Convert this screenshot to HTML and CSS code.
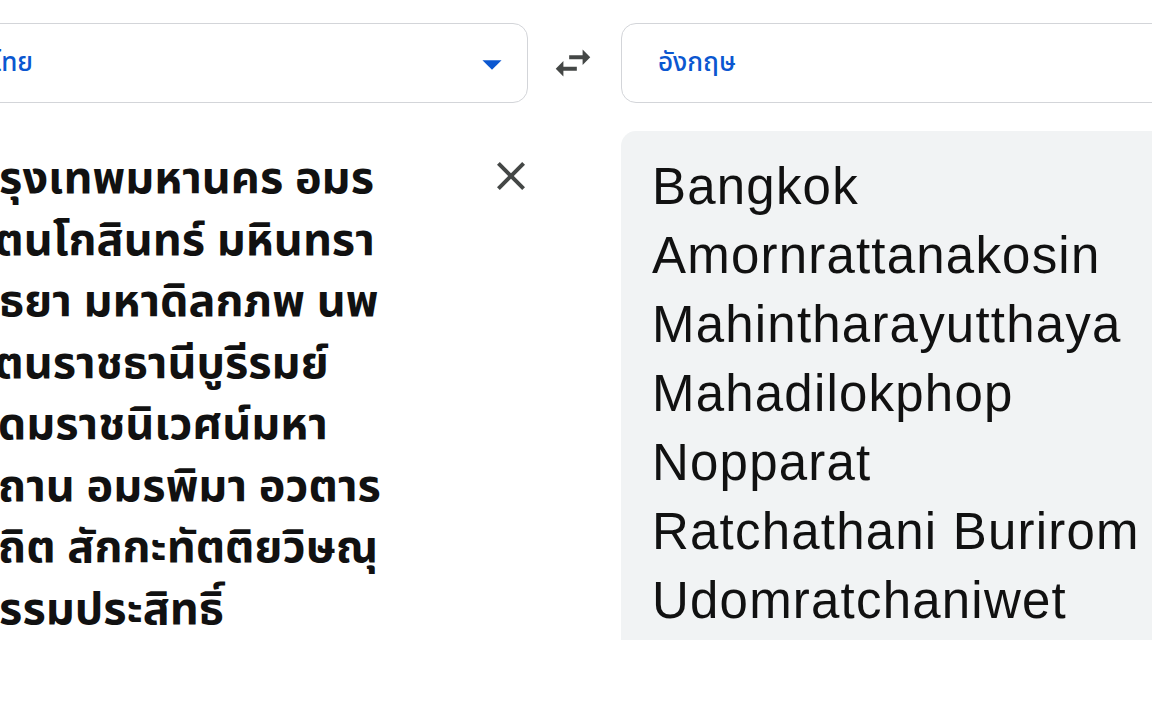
FILE: index.html
```html
<!DOCTYPE html>
<html lang="th">
<head>
<meta charset="utf-8">
<title>Translate</title>
<link rel="stylesheet" href="styles.css">
</head>
<body>
<main class="page">
  <section class="col col-source">
    <div class="lang-box">
      <span class="lang-label">ไทย</span>
      <svg class="drop" viewBox="0 0 24 24" width="46" height="46"><path d="M7 10l5 5 5-5z"/></svg>
    </div>
    <div class="source-area">
      <p class="source-text">กรุงเทพมหานคร อมร<br>รัตนโกสินทร์ มหินทรา<br>ยุธยา มหาดิลกภพ นพ<br>รัตนราชธานีบูรีรมย์<br>อุดมราชนิเวศน์มหา<br>สถาน อมรพิมา อวตาร<br>สถิต สักกะทัตติยวิษณุ<br>กรรมประสิทธิ์</p>
      <button class="clear" aria-label="ล้าง"><svg viewBox="0 0 24 24" width="48" height="48"><path d="M19 6.41L17.59 5 12 10.59 6.41 5 5 6.41 10.59 12 5 17.59 6.41 19 12 13.41 17.59 19 19 17.59 13.41 12z"/></svg></button>
    </div>
  </section>
  <div class="swap-col">
    <svg class="swap" viewBox="0 0 24 24" width="46" height="46"><path d="M6.99 11L3 15l3.99 4v-3H14v-2H6.99v-3zM21 9l-3.99-4v3H10v2h7.01v3L21 9z"/></svg>
  </div>
  <section class="col col-target">
    <div class="lang-box lang-box-target">
      <span class="lang-label">อังกฤษ</span>
    </div>
    <div class="output">
      <p class="output-text">Bangkok<br>Amornrattanakosin<br>Mahintharayutthaya<br>Mahadilokphop<br>Nopparat<br>Ratchathani Burirom<br>Udomratchaniwet</p>
    </div>
  </section>
</main>
</body>
</html>
```
FILE: styles.css
```css
html, body {
  margin: 0;
  padding: 0;
  background: #ffffff;
  overflow: hidden;
  width: 1152px;
  height: 720px;
}
.page {
  display: flex;
  margin-left: -60px;
  padding-top: 23px;
  width: 1400px;
  font-family: "Noto Sans Thai", Tahoma, Loma, Garuda, "Noto Sans", sans-serif;
}
.col-source {
  width: 588px;
  flex: none;
}
.col-target {
  width: 620px;
  flex: none;
}
.lang-box {
  box-sizing: border-box;
  height: 80px;
  border: 1px solid #d3d5d9;
  border-radius: 15px;
  display: flex;
  align-items: center;
  justify-content: space-between;
  padding: 0 12px 0 52px;
}
.lang-box-target {
  padding-left: 36px;
}
.lang-label {
  font-size: 26px;
  font-weight: 500;
  color: #0b57d0;
}
.drop {
  fill: #0b57d0;
  margin-top: 2px;
}
.swap-col {
  width: 93px;
  flex: none;
  height: 80px;
  display: flex;
  align-items: center;
  justify-content: center;
  padding-right: 4px;
  box-sizing: border-box;
}
.swap {
  fill: #444746;
}
.source-area {
  display: flex;
  justify-content: space-between;
  align-items: flex-start;
  padding-top: 46px;
}
.source-text {
  margin: 0;
  font-size: 45px;
  font-weight: 700;
  line-height: 61.5px;
  color: #111111;
  padding-left: 31px;
}
.clear {
  border: 0;
  background: none;
  padding: 0;
  margin: 3px -7px 0 0;
  fill: #444746;
  display: flex;
}
.output {
  margin-top: 28px;
  height: 509px;
  box-sizing: border-box;
  background: #f1f3f4;
  border-radius: 15px 15px 0 0;
  padding: 21px 0 0 31px;
}
.output-text {
  margin: 0;
  font-family: "Liberation Sans", Arial, sans-serif;
  font-size: 51px;
  letter-spacing: 1.2px;
  line-height: 69px;
  color: #111111;
}
```
